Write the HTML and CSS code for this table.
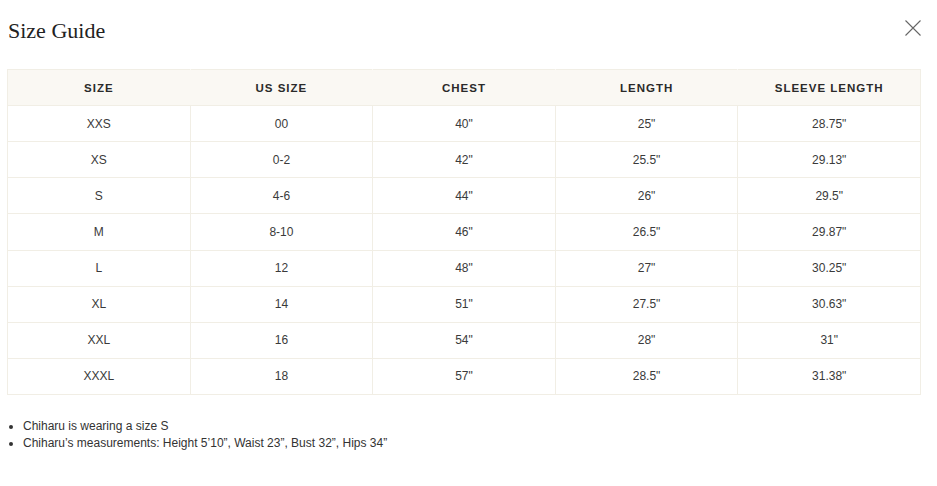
FILE: index.html
```html
<!DOCTYPE html>
<html>
<head>
<meta charset="utf-8">
<link rel="stylesheet" href="styles.css">
</head>
<body>
<div class="modal">
  <div class="modal-head">
    <h2 class="title">Size Guide</h2>
    <button class="close" aria-label="Close">
      <svg width="16" height="16" viewBox="0 0 16 16"><path d="M0.5 0.5L15.5 15.5M15.5 0.5L0.5 15.5" stroke="#666" stroke-width="1.1" fill="none"/></svg>
    </button>
  </div>
  <table class="sizes">
    <thead>
      <tr><th>SIZE</th><th>US SIZE</th><th>CHEST</th><th>LENGTH</th><th>SLEEVE LENGTH</th></tr>
    </thead>
    <tbody>
      <tr><td>XXS</td><td>00</td><td>40"</td><td>25"</td><td>28.75"</td></tr>
      <tr><td>XS</td><td>0-2</td><td>42"</td><td>25.5"</td><td>29.13"</td></tr>
      <tr><td>S</td><td>4-6</td><td>44"</td><td>26"</td><td>29.5"</td></tr>
      <tr><td>M</td><td>8-10</td><td>46"</td><td>26.5"</td><td>29.87"</td></tr>
      <tr><td>L</td><td>12</td><td>48"</td><td>27"</td><td>30.25"</td></tr>
      <tr><td>XL</td><td>14</td><td>51"</td><td>27.5"</td><td>30.63"</td></tr>
      <tr><td>XXL</td><td>16</td><td>54"</td><td>28"</td><td>31"</td></tr>
      <tr><td>XXXL</td><td>18</td><td>57"</td><td>28.5"</td><td>31.38"</td></tr>
    </tbody>
  </table>
  <ul class="notes">
    <li>Chiharu is wearing a size S</li>
    <li>Chiharu’s measurements: Height 5’10”, Waist 23”, Bust 32”, Hips 34”</li>
  </ul>
</div>
</body>
</html>
```

FILE: styles.css
```css
html, body {
  margin: 0;
  padding: 0;
  background: #fff;
}
body {
  font-family: "Liberation Sans", Arial, sans-serif;
  color: #333;
}
.modal {
  padding: 0 16px 0 7px;
}
.modal-head {
  display: flex;
  justify-content: space-between;
  align-items: flex-start;
  height: 69px;
}
.title {
  margin: 18px 0 0 1px;
  font-family: "Liberation Serif", "Times New Roman", serif;
  font-weight: 400;
  font-size: 22px;
  line-height: 26px;
  color: #222;
}
.close {
  margin: 20px 0 0 0;
  padding: 0;
  border: 0;
  background: none;
  width: 16px;
  height: 16px;
}
.close svg { display: block; }
.sizes {
  width: 914px;
  border-collapse: collapse;
  table-layout: fixed;
  font-size: 12px;
}
.sizes th, .sizes td {
  border: 1px solid #f1eee5;
  text-align: center;
  height: 35.125px;
  padding: 0;
}
.sizes th {
  height: 35px;
  background: #faf8f3;
  font-weight: 700;
  font-size: 11.5px;
  letter-spacing: 1px;
  color: #2a2a2a;
  border-left-color: #faf8f3;
  border-right-color: #faf8f3;
}
.sizes th:first-child { border-left-color: #f1eee5; }
.sizes th:last-child { border-right-color: #f1eee5; }
.sizes td {
  color: #3a3a3a;
}
.notes {
  margin: 23px 0 0 0;
  padding-left: 16px;
  font-size: 12px;
  line-height: 17px;
  color: #333;
}
```
